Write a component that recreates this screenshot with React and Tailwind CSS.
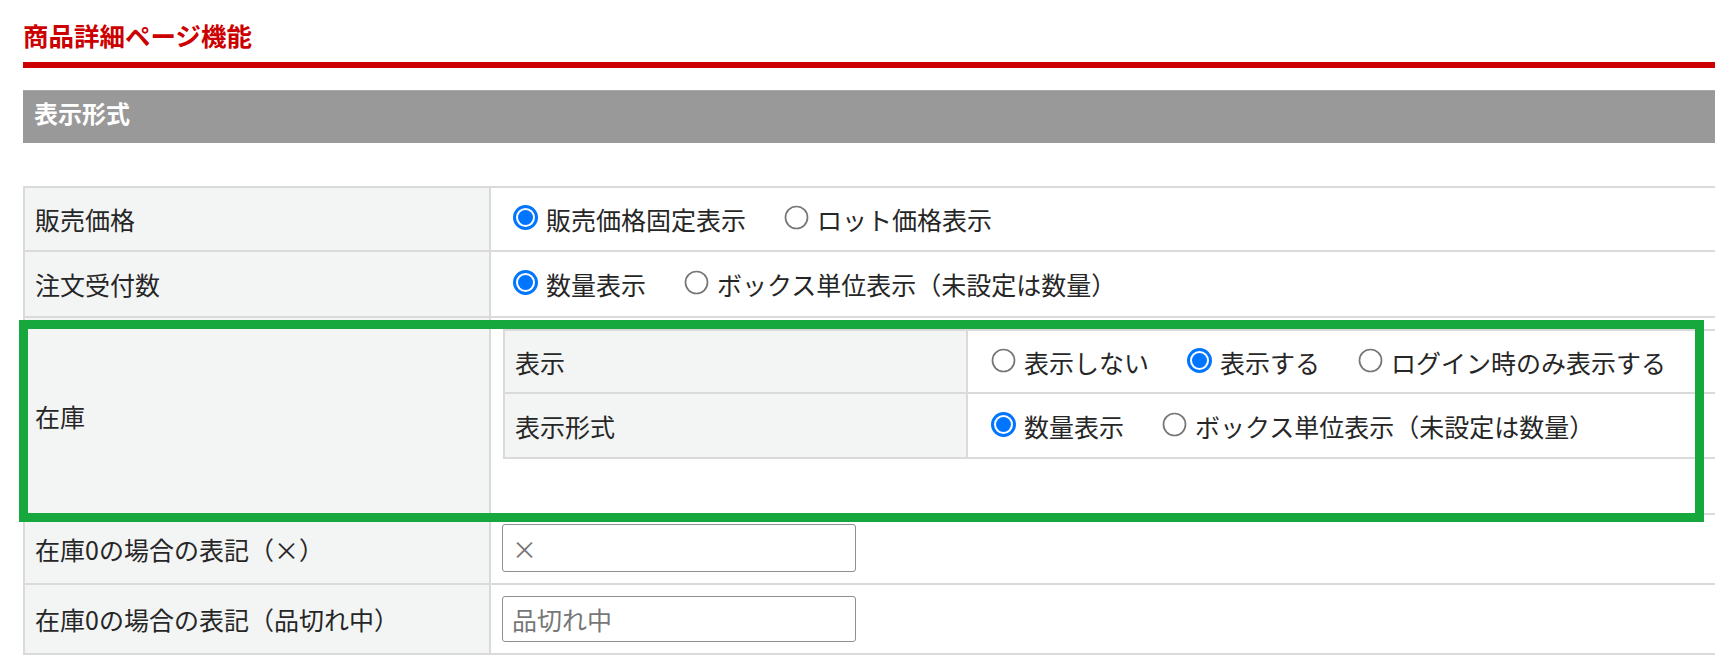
import React from 'react';

const Radio = ({ checked }) =>
  checked ? (
    <svg width="25" height="25" viewBox="0 0 25 25" className="shrink-0 -mt-[3px]">
      <circle cx="12.5" cy="12.5" r="11" fill="#fff" stroke="#0075ff" strokeWidth="3" />
      <circle cx="12.5" cy="12.5" r="7.5" fill="#0075ff" />
    </svg>
  ) : (
    <svg width="25" height="25" viewBox="0 0 25 25" className="shrink-0 -mt-[3px]">
      <circle cx="12.5" cy="12.5" r="11" fill="#fff" stroke="#767676" strokeWidth="1.7" />
    </svg>
  );

const Options = ({ items, checked }) => (
  <div className="flex items-center">
    {items.map((label, i) => (
      <label key={i} className="flex items-center mr-[38px]">
        <Radio checked={i === checked} />
        <span className="ml-[8px] leading-[30px]">{label}</span>
      </label>
    ))}
  </div>
);

const Row = ({ label, height, children, middle = true }) => (
  <div className={`flex border-b-2 border-[#dadada] ${height}`}>
    <div className="w-[466px] shrink-0 border-r-2 border-[#dadada] bg-[#f3f4f4] flex items-center pl-[10px] leading-[30px]">
      {label}
    </div>
    <div className={`flex-1 flex ${middle ? 'items-center pl-[22px]' : 'flex-col items-start'}`}>{children}</div>
  </div>
);

const SubRow = ({ label, height, children }) => (
  <div className={`flex border-b-2 border-[#dadada] ${height}`}>
    <div className="w-[463px] shrink-0 border-r-2 border-[#dadada] bg-[#f3f4f4] flex items-center pl-[10px] leading-[30px]">
      {label}
    </div>
    <div className="flex-1 flex items-center pl-[23px]">{children}</div>
  </div>
);

const TextBox = ({ value, height }) => (
  <div className={`ml-[-11px] w-[354px] ${height} border-[1.5px] border-[#8f8f8f] rounded-[3px] bg-white flex items-center pl-[9px] text-[#777] leading-[30px]`}>
    {value}
  </div>
);

const App = () => {
  const boxText = ['ボックス単位表示（未設定は数量）'];
  return (
    <div className="relative w-[1715px] h-[661px] overflow-hidden bg-white text-[#262626] text-[25px] font-['Noto_Sans_CJK_JP','Noto_Sans',sans-serif]">
      <div className="pl-[23px]">
        <div className="pt-[20px] h-[50px] text-[25.5px] leading-[30px] font-bold text-[#cc0000]">商品詳細ページ機能</div>
        <div className="mt-[12px] h-[6px] bg-[#cc0000]" />
        <div className="mt-[22px] h-[53px] bg-[#999999] border-t border-[#a8a8a8] pt-[7px] pl-[11px] text-white font-bold text-[24px] leading-[30px]">
          表示形式
        </div>

        <div className="mt-[43px] w-[1720px] border-t-2 border-l-2 border-[#dadada]">
          <Row label="販売価格" height="h-[64px]">
            <Options items={['販売価格固定表示', 'ロット価格表示']} checked={0} />
          </Row>
          <Row label="注文受付数" height="h-[66px]">
            <Options items={['数量表示', ...boxText]} checked={0} />
          </Row>
          <Row label="在庫" height="h-[197px]" middle={false}>
            <div className="mt-[11px] ml-[12px] w-[1240px] border-t-2 border-l-2 border-[#dadada]">
              <SubRow label="表示" height="h-[63px]">
                <Options items={['表示しない', '表示する', 'ログイン時のみ表示する']} checked={1} />
              </SubRow>
              <SubRow label="表示形式" height="h-[65px]">
                <Options items={['数量表示', ...boxText]} checked={0} />
              </SubRow>
            </div>
          </Row>
          <Row label="在庫0の場合の表記（×）" height="h-[70px]">
            <TextBox value="×" height="h-[48px] -mt-[2px]" />
          </Row>
          <Row label="在庫0の場合の表記（品切れ中）" height="h-[70px]">
            <TextBox value="品切れ中" height="h-[46px]" />
          </Row>
        </div>
      </div>

      <div className="absolute left-[19px] top-[320px] w-[1685px] h-[202px] border-[9px] border-[#16a73d]" />
    </div>
  );
};

export default App;
